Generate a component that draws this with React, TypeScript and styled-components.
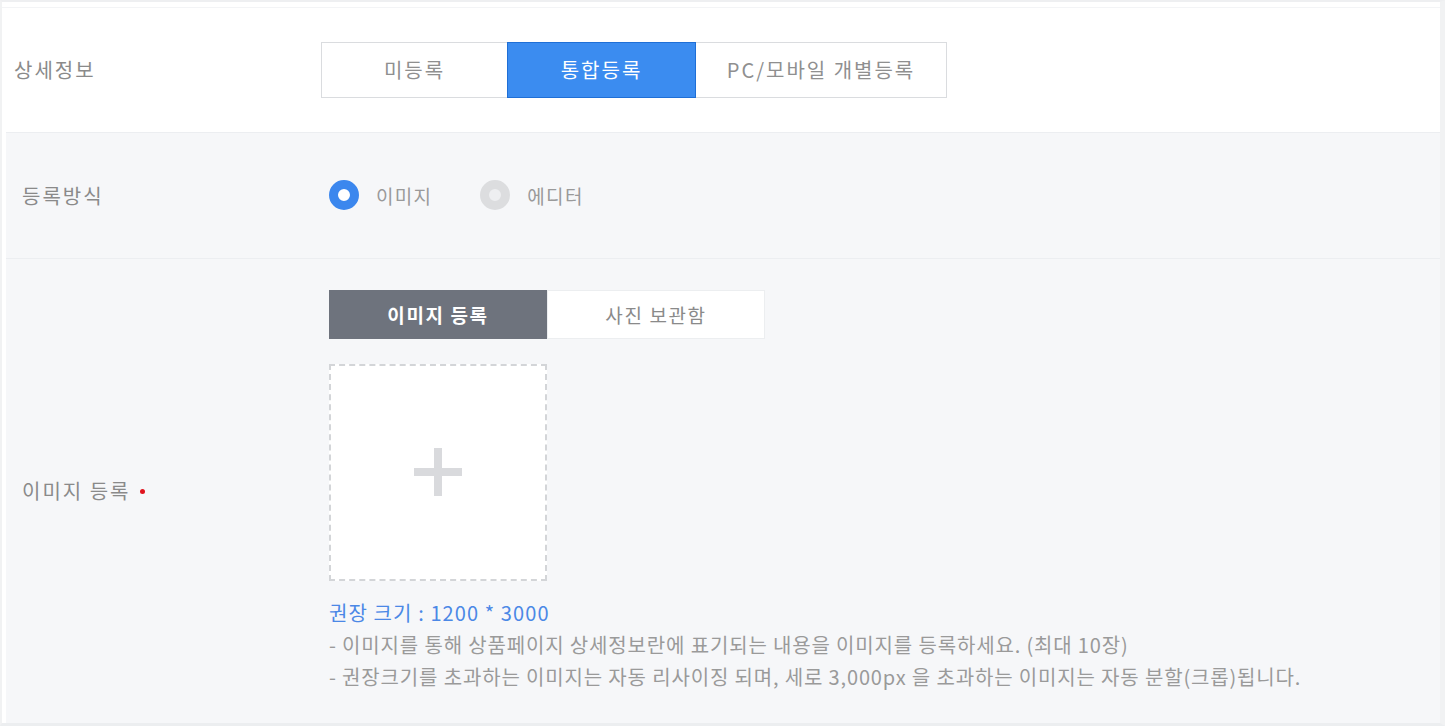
import React, { useState } from "react"
import styled, { createGlobalStyle } from "styled-components"

const GlobalStyle = createGlobalStyle`
  html, body {
    margin: 0;
    padding: 0;
    background: #ffffff;
  }
  body {
    font-family: "Noto Sans CJK KR", "Noto Sans", sans-serif;
  }
`

const Frame = styled.div`
  width: 1445px;
  height: 726px;
  box-sizing: border-box;
  border-top: 2px solid #eeeff1;
  border-left: 2px solid #f1f2f3;
  border-right: 5px solid #f1f2f3;
  border-bottom: 3px solid #eceef0;
  padding-top: 5px;
  display: flex;
  flex-direction: column;
  background: #ffffff;
  overflow: hidden;
`

const Section = styled.div<{ $tinted?: boolean; $height: number; $labelLeft: number; $indent: number }>`
  display: flex;
  align-items: center;
  height: ${props => props.$height}px;
  box-sizing: border-box;
  margin-left: ${props => props.$indent}px;
  padding-left: ${props => props.$labelLeft}px;
  background: ${props => (props.$tinted ? "#f6f7f9" : "#ffffff")};
  border-top: 1px solid ${props => (props.$tinted ? "#eceef1" : "#f3f4f6")};
`

const Label = styled.div<{ $width: number }>`
  width: ${props => props.$width}px;
  flex-shrink: 0;
  font-size: 20px;
  color: #8a8a8a;
  letter-spacing: 2px;
  display: flex;
  align-items: center;
`

const RequiredDot = styled.span`
  width: 5px;
  height: 5px;
  border-radius: 50%;
  background: #e0141e;
  margin-left: 10px;
  margin-top: 2px;
`

const Body = styled.div`
  display: flex;
  flex-direction: column;
`

const SegmentGroup = styled.div`
  display: flex;
  height: 56px;
`

const Segment = styled.button<{ $active?: boolean; $width: number }>`
  width: ${props => props.$width}px;
  height: 56px;
  margin-left: -1px;
  padding: 0;
  font-family: inherit;
  font-size: 20px;
  letter-spacing: 2px;
  cursor: pointer;
  border: 1px solid ${props => (props.$active ? "#1f6fd6" : "#dadcdf")};
  background: ${props => (props.$active ? "#3b8cf0" : "#ffffff")};
  color: ${props => (props.$active ? "#ffffff" : "#8f8f8f")};
  position: ${props => (props.$active ? "relative" : "static")};
  z-index: ${props => (props.$active ? 1 : 0)};
  &:first-child {
    margin-left: 0;
  }
`

const RadioRow = styled.div`
  display: flex;
  align-items: center;
`

const RadioItem = styled.label`
  display: flex;
  align-items: center;
  margin-right: 48px;
  cursor: pointer;
`

const RadioMark = styled.span<{ $checked?: boolean }>`
  width: 30px;
  height: 30px;
  box-sizing: border-box;
  border-radius: 50%;
  border: 9px solid ${props => (props.$checked ? "#3b87ee" : "#dcdddf")};
  background: ${props => (props.$checked ? "#ffffff" : "#eeeff1")};
  margin-right: 17px;
`

const RadioText = styled.span`
  font-size: 19px;
  letter-spacing: 1.3px;
  color: #9a9a9a;
`

const Tabs = styled.div`
  display: flex;
  height: 49px;
  margin-top: 1px;
`

const Tab = styled.button<{ $active?: boolean }>`
  width: 218px;
  height: 49px;
  padding: 0;
  font-family: inherit;
  font-size: 19px;
  font-weight: ${props => (props.$active ? 700 : 400)};
  letter-spacing: 1.6px;
  cursor: pointer;
  border: 1px solid ${props => (props.$active ? "#6e737d" : "#eceef0")};
  background: ${props => (props.$active ? "#6e737d" : "#ffffff")};
  color: ${props => (props.$active ? "#ffffff" : "#8a8a8a")};
`

const Upload = styled.div`
  width: 218px;
  height: 217px;
  box-sizing: border-box;
  margin-top: 25px;
  border: 2px dashed #d3d5d8;
  background: #ffffff;
  display: flex;
  align-items: center;
  justify-content: center;
  cursor: pointer;
`

const Notes = styled.div`
  margin-top: 16px;
  display: flex;
  flex-direction: column;
`

const Note = styled.p<{ $accent?: boolean }>`
  margin: 0;
  line-height: 32px;
  font-size: 20px;
  letter-spacing: ${props => (props.$accent ? "1.1px" : "0.85px")};
  color: ${props => (props.$accent ? "#4b88e6" : "#9a9a9a")};
  white-space: nowrap;
`

const PlusIcon = () => (
  <svg width="48" height="48" viewBox="0 0 48 48">
    <rect x="20" y="0" width="8" height="48" fill="#d9dadd" />
    <rect x="0" y="20" width="48" height="8" fill="#d9dadd" />
  </svg>
)

export default function App() {
  const [mode, setMode] = useState("integrated")
  const [method, setMethod] = useState("image")
  const [tab, setTab] = useState("upload")

  return (
    <>
      <GlobalStyle />
      <Frame>
        <Section $height={125} $labelLeft={12} $indent={0}>
          <Label $width={307}>상세정보</Label>
          <SegmentGroup>
            <Segment $width={187} $active={mode === "none"} onClick={() => setMode("none")}>
              미등록
            </Segment>
            <Segment $width={189} $active={mode === "integrated"} onClick={() => setMode("integrated")}>
              통합등록
            </Segment>
            <Segment $width={252} $active={mode === "separate"} onClick={() => setMode("separate")}>
              PC/모바일 개별등록
            </Segment>
          </SegmentGroup>
        </Section>

        <Section $tinted $height={126} $labelLeft={16} $indent={4}>
          <Label $width={307}>등록방식</Label>
          <RadioRow>
            <RadioItem onClick={() => setMethod("image")}>
              <RadioMark $checked={method === "image"} />
              <RadioText>이미지</RadioText>
            </RadioItem>
            <RadioItem>
              <RadioMark />
              <RadioText>에디터</RadioText>
            </RadioItem>
          </RadioRow>
        </Section>

        <Section $tinted $height={466} $labelLeft={16} $indent={4}>
          <Label $width={307}>
            이미지 등록
            <RequiredDot />
          </Label>
          <Body>
            <Tabs>
              <Tab $active={tab === "upload"} onClick={() => setTab("upload")}>
                이미지 등록
              </Tab>
              <Tab $active={tab === "album"} onClick={() => setTab("album")}>
                사진 보관함
              </Tab>
            </Tabs>
            <Upload>
              <PlusIcon />
            </Upload>
            <Notes>
              <Note $accent>권장 크기 : 1200 * 3000</Note>
              <Note>- 이미지를 통해 상품페이지 상세정보란에 표기되는 내용을 이미지를 등록하세요. (최대 10장)</Note>
              <Note>- 권장크기를 초과하는 이미지는 자동 리사이징 되며, 세로 3,000px 을 초과하는 이미지는 자동 분할(크롭)됩니다.</Note>
            </Notes>
          </Body>
        </Section>
      </Frame>
    </>
  )
}
